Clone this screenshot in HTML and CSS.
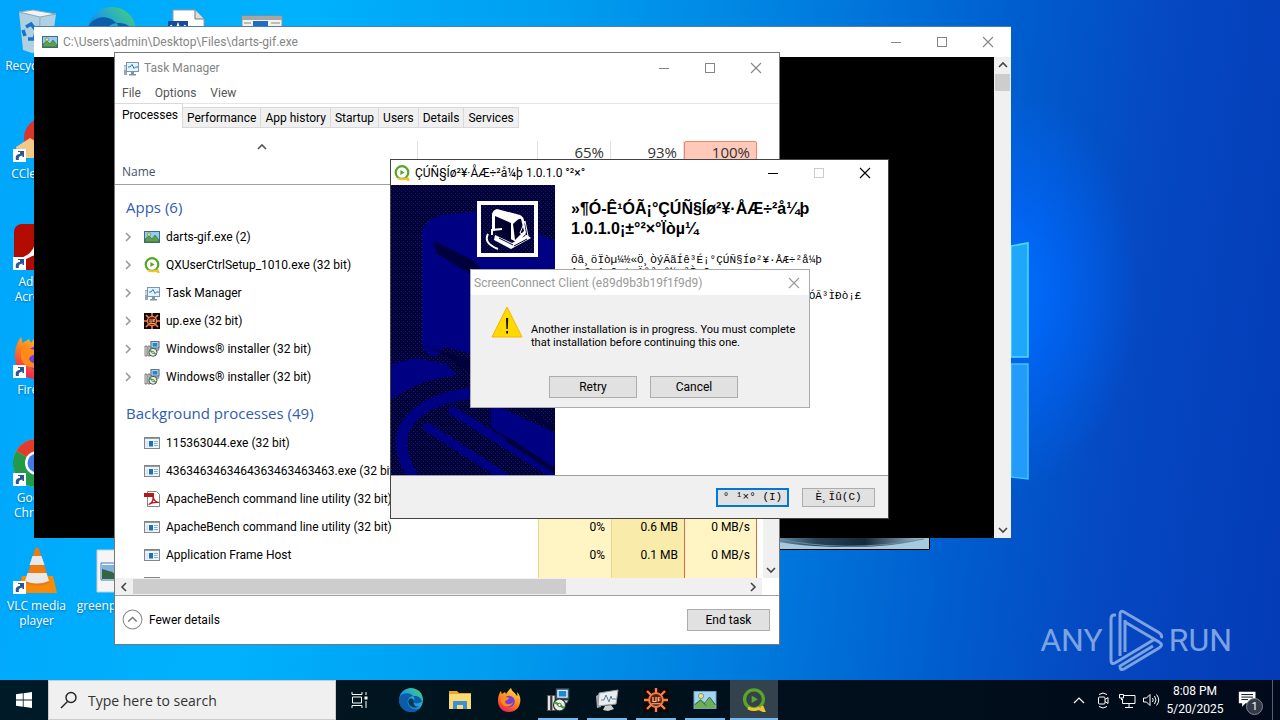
FILE: index.html
```html
<!DOCTYPE html>
<html lang="en">
<head>
<meta charset="utf-8">
<title>Desktop</title>
<link rel="stylesheet" href="styles.css">
</head>
<body>
<svg class="defs" aria-hidden="true">
  <defs>
    <linearGradient id="edgeG" x1="0" y1="1" x2="1" y2="0"><stop offset="0" stop-color="#0c59a4"/><stop offset=".5" stop-color="#1b9de2"/><stop offset="1" stop-color="#4fd66b"/></linearGradient>
    <linearGradient id="foxG" x1="0.8" y1="0" x2="0.3" y2="1"><stop offset="0" stop-color="#ffe14a"/><stop offset=".5" stop-color="#ff8a1e"/><stop offset="1" stop-color="#f0204f"/></linearGradient>
    <linearGradient id="steelG" x1="0" y1="0" x2="1" y2="0"><stop offset="0" stop-color="#6d9cba"/><stop offset=".3" stop-color="#274257"/><stop offset=".6" stop-color="#152a3a"/><stop offset="1" stop-color="#a8cbe0"/></linearGradient>
    <pattern id="dots" width="4" height="4" patternUnits="userSpaceOnUse"><rect width="4" height="4" fill="#00003c"/><path d="M0 0h1v1H0zM2 2h1v1H2z" fill="#1c1c50"/></pattern>
  </defs>
  <symbol id="i-picture" viewBox="0 0 16 16"><rect x=".5" y="2.500" width="15" height="11" fill="#8fd0f2" stroke="#3b6f8c"/><path d="M1 13v-3l4-3 3 3 3-4 4 5v2z" fill="#5f9f4c" stroke="#2f5f3c" stroke-width=".6"/><circle cx="5" cy="5.500" r="1.700" fill="#f5e56b" stroke="#4d6d5b" stroke-width=".6"/></symbol>
  <symbol id="i-picture-lg" viewBox="0 0 24 24"><rect x="1" y="3.500" width="22" height="17" fill="#a5d5f2" stroke="#6fa3c4"/><path d="M1.500 20v-4l6-5 5 4 4-6 6 7v4z" fill="#6fae55"/><path d="M1.500 17l6-5 6 6M11 16l5.500-7 6 8" fill="none" stroke="#2f6f5c"/><circle cx="8" cy="8" r="2.600" fill="#f7e05f" stroke="#5b8aa0" stroke-width=".8"/></symbol>
  <symbol id="i-qx" viewBox="0 0 16 16"><circle cx="8" cy="7.500" r="6.300" fill="none" stroke="#58a528" stroke-width="2.200"/><path d="M4 13.200c3 1.500 5 1.500 7 .4l3.500 1.600-1.300-3.200" fill="none" stroke="#f0c42e" stroke-width="2"/><path d="M6.400 5v5l4.200-2.500z" fill="#58a528"/></symbol>
  <symbol id="i-tm" viewBox="0 0 16 16"><path d="M1 5h3v10H1z" fill="#9aa6b0"/><path d="M1 7h3M1 9h3" stroke="#fff"/><rect x="3.500" y="2.500" width="12" height="9" fill="#e3f2fb" stroke="#7c95a8"/><path d="M5 7h2l2-2.500 2 4 1.500-1.500H15" fill="none" stroke="#2478c0"/><path d="M8 12h3v2h2v1.500H6V14h2z" fill="#7c95a8"/></symbol>
  <symbol id="i-up" viewBox="0 0 16 16"><rect width="16" height="16" fill="#130704"/><circle cx="8" cy="8" r="4.600" fill="#5c1d0a" stroke="#ef7b45" stroke-width="1.300"/><path d="M8 0v4M8 12v4M0 8h4M12 8h4M2 2l3 3M11 11l3 3M14 2l-3 3M5 11l-3 3" stroke="#f08250" stroke-width="1.600"/><path d="M6 6v3h2V6M9.500 9V6.500H11M9.500 8H11M5 10.500h6" fill="none" stroke="#ffc08c" stroke-width=".8"/></symbol>
  <symbol id="i-inst" viewBox="0 0 16 16"><path d="M1 5h2v10H1zM4 5h2v10H4z" fill="#e6e6e6" stroke="#555" stroke-width=".7"/><rect x="7" y=".7" width="8" height="6.300" fill="#e6eef4" stroke="#39536b"/><rect x="8.500" y="2" width="5" height="3.700" fill="#178bd8"/><path d="M9 8h6l-1 2h-4z" fill="#c5d1d9" stroke="#444" stroke-width=".5"/><circle cx="9" cy="11.300" r="4" fill="#e4f2e0" stroke="#333" stroke-width=".8"/><path d="M9 11.300 5.800 9.500M9 11.300l3 2" stroke="#43a34a" stroke-width="1.500"/><circle cx="9" cy="11.300" r="1.100" fill="#fff" stroke="#333" stroke-width=".5"/></symbol>
  <symbol id="i-app" viewBox="0 0 16 16"><rect x=".5" y="2.500" width="15" height="11" fill="#eef5fa" stroke="#858585"/><path d="M1 3h14v1H1z" fill="#999"/><rect x="5" y="6" width="4" height="5.500" fill="#1c72b8"/><path d="M10 6.500h4M10 8.500h3.500M10 10.500h4" stroke="#7cb3d6"/><path d="M2 6v6M3.500 6v6" stroke="#cfe3f0"/></symbol>
  <symbol id="i-pdf" viewBox="0 0 16 16"><path d="M3.500.5h9l3 3v12h-12z" fill="#fff" stroke="#8d8080"/><path d="M0 2h10v4H0z" fill="#b3171f"/><path d="M4.500 13.500c3-1 5-4 4.500-8 1 4 3 6 6 6-4-.5-8 .5-10.500 2z" fill="none" stroke="#b3171f" stroke-width="1.200"/></symbol>
  <symbol id="i-edge" viewBox="0 0 24 24"><circle cx="12" cy="12" r="12" fill="url(#edgeG)"/><path d="M0 12c0-6 8-9 13-5 4 3 2 6 1 7 2 2 6 2 9-.5C22 10 20 8 15 8 9 8 7 14 10 18s8 4 11 2c-3 4-8 5-13 3C3 21 0 17 0 12z" fill="#0b5cab"/><path d="M14.500 14.500c.8-1.500 0-4-2.500-4-3 0-3.500 4-1 7 2 2 6 3 10 1-3 1-6 0-6.500-4z" fill="#06182c" opacity=".75"/></symbol>
  <symbol id="i-folder" viewBox="0 0 24 24"><path d="M1 3h8l2 2h12v3H1z" fill="#e9a823"/><path d="M1 6h22v15H1z" fill="#fbd975"/><path d="M5 21v-7q0-1 1-1h12q1 0 1 1v7h-4v-4H9v4z" fill="#3b8fd2"/></symbol>
  <symbol id="i-firefox" viewBox="0 0 24 24"><path d="M12 24C5 24 .8 19 1 12 1 8 3 4 4 3l.8 3L8 4l1 2c2-3 4-5 5-6 1 4 4 4 6 8 1-1 0-3 0-4 3 3 4 7 3 11-1 6-6 9-11 9z" fill="url(#foxG)"/><circle cx="12" cy="13.500" r="5.800" fill="#7540d8"/><path d="M4 9c3-1 6 0 8 1 0 2-4 2-4 4 1 3 6 3 8 0-1 6-11 6-12-1z" fill="#ff8b18"/></symbol>
  <symbol id="i-chrome" viewBox="0 0 48 48"><circle cx="24" cy="24" r="24" fill="#f6c324"/><path d="M24 24 3.200 12A24 24 0 0 1 44.800 12z" fill="#e33b2e"/><path d="M24 24 3.200 12A24 24 0 0 0 24 48l10-18z" fill="#229a4a"/><circle cx="24" cy="24" r="12" fill="#fff"/><circle cx="24" cy="24" r="9.500" fill="#4079e8"/></symbol>
  <symbol id="i-min" viewBox="0 0 12 12"><path d="M1 6.500h10" stroke="currentColor"/></symbol>
  <symbol id="i-max" viewBox="0 0 12 12"><rect x="1.500" y="1.500" width="9" height="9" fill="none" stroke="currentColor"/></symbol>
  <symbol id="i-close" viewBox="0 0 12 12"><path d="M1 1l10 10M11 1 1 11" stroke="currentColor" stroke-width="1.100"/></symbol>
  <symbol id="i-chev" viewBox="0 0 10 10"><path d="M3 1l4 4-4 4" fill="none" stroke="currentColor" stroke-width="1.600"/></symbol>
  <symbol id="i-link" viewBox="0 0 13 13"><rect width="13" height="13" fill="#fff"/><path d="M3 11c-1-4 1-6 4-6V3H5V2h6v6H9.500V6.500C7 7 5 8 6 11z" fill="#2b5797"/></symbol>
</svg>

<div class="screen">
  <main class="desktop">
    <svg class="wall-logo" viewBox="0 0 30 250" aria-hidden="true"><path d="M0 9l17-3v114H0z" fill="#1fa8fb" stroke="#4fdcff" stroke-width="1.500"/><path d="M0 127h17v115l-17-2z" fill="#229bfa" stroke="#3cc4ff" stroke-width="1.500"/></svg>

    <ul class="shortcuts">
      <li class="shortcut r1 c1"><svg viewBox="0 0 48 48"><path d="M6 5l14-2 23 4-5 36-19 3-9-3z" fill="#c3d5de" opacity=".9"/><path d="M6 5l14-2 23 4-16 3z" fill="#eef4f7" stroke="#8fa6b2"/><path d="M27 10l-1 35" stroke="#96abb7"/><path d="M13 20l5-3 4 5M23 26l-2 6h-6M12 29l-2-6" fill="none" stroke="#1674c9" stroke-width="3.500"/></svg><span>Recycle Bin</span></li>
      <li class="shortcut r1 c2"><svg viewBox="0 0 24 24"><use href="#i-edge"/></svg></li>
      <li class="shortcut r1 c3"><svg viewBox="0 0 48 48"><path d="M10 3h22l9 9v36H10z" fill="#fff" stroke="#9a9a9a"/><path d="M32 3v9h9" fill="#ddd" stroke="#777"/><path d="M5 14h20v20H5z" fill="#164a9c"/><path d="M8 18l3 12 4-12 4 12 3-12" fill="none" stroke="#fff" stroke-width="2"/></svg></li>
      <li class="shortcut r1 c4"><svg viewBox="0 0 48 48"><path d="M4 9h40v34H4z" fill="#f1f1f1" stroke="#8f8f8f"/><path d="M4 9h40v4H4z" fill="#a9a49e"/><path d="M15 14h15v18H15z" fill="#1c6fc2"/><path d="M33 16h9M33 20h9M6 16h7M6 20h7" stroke="#888"/></svg></li>
      <li class="shortcut r2 c1"><svg viewBox="0 0 48 48"><circle cx="31" cy="23" r="20" fill="#d9352c"/><circle cx="33" cy="25" r="12" fill="#5a9fdc"/><path d="M3 32l14-9 10 6v14H6z" fill="#f3c98b"/><use href="#i-link" x="0" y="34" width="13" height="13"/></svg><span>CCleaner</span></li>
      <li class="shortcut r3 c1"><svg viewBox="0 0 48 48"><rect x="1" y="1" width="46" height="46" rx="8" fill="#b30b00"/><path d="M10 36c10-4 16-14 14-25 2 12 8 17 16 18-10-1-21 1-30 7z" fill="none" stroke="#fff" stroke-width="3"/><use href="#i-link" x="0" y="34" width="13" height="13"/></svg><span>Adobe Acrobat</span></li>
      <li class="shortcut r4 c1"><svg viewBox="0 0 48 48"><use href="#i-firefox" width="48" height="48"/><use href="#i-link" x="0" y="34" width="13" height="13"/></svg><span>Firefox</span></li>
      <li class="shortcut r5 c1"><svg viewBox="0 0 48 48"><use href="#i-chrome" width="48" height="48"/><use href="#i-link" x="0" y="34" width="13" height="13"/></svg><span>Google Chrome</span></li>
      <li class="shortcut r6 c1"><svg viewBox="0 0 48 48"><path d="M9 29h31l4 17H4z" fill="#f58a0b"/><path d="M22 2q2-3 4 0l11 34q-13 6-25 0z" fill="#ef7a12"/><path d="M19.500 9h9l3 9h-15zM14.500 26h19l2.500 8q-12 5-24 0z" fill="#e9e9e9"/><use href="#i-link" x="0" y="34" width="13" height="13"/></svg><span>VLC media player</span></li>
      <li class="shortcut r6 c2"><svg viewBox="0 0 48 48"><path d="M9 3h30v42H9z" fill="#f5f5f5" stroke="#ccc"/><path d="M13 16h21v17H13z" fill="#fff" stroke="#3f75b5"/><path d="M14 18h19v7H14z" fill="#7fb2e2"/><path d="M14 22q8 2 19 6v4H14z" fill="#326546"/></svg><span>greenps.png</span></li>
    </ul>

    <svg class="photo" viewBox="0 0 160 12" preserveAspectRatio="none" aria-hidden="true"><rect width="160" height="12" fill="#a5c9de"/><path d="M0 0h158q-30 9-80 9T0 2z" fill="url(#steelG)"/><path d="M4 0q70 16 150 1" fill="none" stroke="#6c8ba0"/><path d="M0 11.500h159.500V0" fill="none" stroke="#000"/></svg>

    <div class="watermark"><span>ANY</span><svg viewBox="0 0 56 64" aria-hidden="true"><path d="M8 7H6q-3 0-3 4v41q0 5 4 3l40-24M12 48V6q0-4 4-2l34 20q5 3 3 6M17 12v32M17 14l34 20q5 3 0 6L16 61q-4 2-4-3l33-20" fill="none" stroke="currentColor" stroke-width="3"/></svg><span>RUN</span></div>

    <section class="window console">
      <header class="titlebar"><svg class="ic"><use href="#i-picture"/></svg><span class="title">C:\Users\admin\Desktop\Files\darts-gif.exe</span>
        <button aria-label="Minimize"><svg><use href="#i-min"/></svg></button><button aria-label="Maximize"><svg><use href="#i-max"/></svg></button><button aria-label="Close"><svg><use href="#i-close"/></svg></button></header>
      <div class="console-body"><div class="vscroll"><svg class="up"><use href="#i-chev"/></svg><i class="thumb"></i><svg class="down"><use href="#i-chev"/></svg></div></div>
    </section>

    <section class="window taskmgr">
      <header class="titlebar"><svg class="ic"><use href="#i-tm"/></svg><span class="title">Task Manager</span>
        <button aria-label="Minimize"><svg><use href="#i-min"/></svg></button><button aria-label="Maximize"><svg><use href="#i-max"/></svg></button><button aria-label="Close"><svg><use href="#i-close"/></svg></button></header>
      <nav class="menu"><button>File</button><button>Options</button><button>View</button></nav>
      <nav class="tabs"><button class="on">Processes</button><button>Performance</button><button>App history</button><button>Startup</button><button>Users</button><button>Details</button><button>Services</button></nav>
      <div class="list">
        <div class="clip">
          <table>
            <colgroup><col><col class="c-status"><col class="c-num"><col class="c-num"><col class="c-num"></colgroup>
            <thead><tr><th><svg class="sort"><use href="#i-chev"/></svg><span>Name</span></th><th></th><th>65%</th><th>93%</th><th class="hot">100%</th></tr></thead>
            <tbody>
              <tr class="group"><td colspan="2">Apps (6)</td><td></td><td></td><td></td></tr>
              <tr><td colspan="2"><div class="proc"><svg class="tw"><use href="#i-chev"/></svg><svg class="ic"><use href="#i-picture"/></svg>darts-gif.exe (2)</div></td><td></td><td></td><td></td></tr>
              <tr><td colspan="2"><div class="proc"><svg class="tw"><use href="#i-chev"/></svg><svg class="ic"><use href="#i-qx"/></svg>QXUserCtrlSetup_1010.exe (32 bit)</div></td><td></td><td></td><td></td></tr>
              <tr><td colspan="2"><div class="proc"><svg class="tw"><use href="#i-chev"/></svg><svg class="ic"><use href="#i-tm"/></svg>Task Manager</div></td><td></td><td></td><td></td></tr>
              <tr><td colspan="2"><div class="proc"><svg class="tw"><use href="#i-chev"/></svg><svg class="ic"><use href="#i-up"/></svg>up.exe (32 bit)</div></td><td></td><td></td><td></td></tr>
              <tr><td colspan="2"><div class="proc"><svg class="tw"><use href="#i-chev"/></svg><svg class="ic"><use href="#i-inst"/></svg>Windows® installer (32 bit)</div></td><td></td><td></td><td></td></tr>
              <tr><td colspan="2"><div class="proc"><svg class="tw"><use href="#i-chev"/></svg><svg class="ic"><use href="#i-inst"/></svg>Windows® installer (32 bit)</div></td><td></td><td></td><td></td></tr>
              <tr class="group"><td colspan="2">Background processes (49)</td><td></td><td></td><td></td></tr>
              <tr><td colspan="2"><div class="proc sub"><svg class="ic"><use href="#i-app"/></svg>115363044.exe (32 bit)</div></td><td></td><td></td><td></td></tr>
              <tr><td colspan="2"><div class="proc sub"><svg class="ic"><use href="#i-app"/></svg>4363463463464363463463463.exe (32 bit)</div></td><td></td><td></td><td></td></tr>
              <tr><td colspan="2"><div class="proc sub"><svg class="ic"><use href="#i-pdf"/></svg>ApacheBench command line utility (32 bit)</div></td><td></td><td></td><td></td></tr>
              <tr><td colspan="2"><div class="proc sub"><svg class="ic"><use href="#i-app"/></svg>ApacheBench command line utility (32 bit)</div></td><td>0%</td><td>0.6 MB</td><td>0 MB/s</td></tr>
              <tr><td colspan="2"><div class="proc sub"><svg class="ic"><use href="#i-app"/></svg>Application Frame Host</div></td><td>0%</td><td>0.1 MB</td><td>0 MB/s</td></tr>
              <tr><td colspan="2"><div class="proc sub"><svg class="ic"><use href="#i-app"/></svg></div></td><td></td><td></td><td></td></tr>
            </tbody>
          </table>
        </div>
        <div class="vscroll"><svg class="down"><use href="#i-chev"/></svg></div>
      </div>
      <div class="hscroll"><svg class="left"><use href="#i-chev"/></svg><i class="thumb"></i><svg><use href="#i-chev"/></svg></div>
      <footer class="tm-foot"><button class="fewer"><svg viewBox="0 0 20 20"><circle cx="10" cy="10" r="9" fill="none" stroke="#8a8a8a"/><path d="M6 12l4-4 4 4" fill="none" stroke="#777" stroke-width="1.300"/></svg>Fewer details</button><button class="btn">End task</button></footer>
    </section>

    <section class="window wizard">
      <header class="titlebar"><svg class="ic"><use href="#i-qx"/></svg><span class="title">ÇÚÑ§Íø²¥·ÅÆ÷²å¼þ 1.0.1.0 °²×°</span>
        <button aria-label="Minimize"><svg><use href="#i-min"/></svg></button><button class="off" aria-label="Maximize" disabled><svg><use href="#i-max"/></svg></button><button aria-label="Close"><svg><use href="#i-close"/></svg></button></header>
      <div class="wiz-body">
        <svg class="art" viewBox="0 0 164 290" preserveAspectRatio="xMidYMin slice" aria-hidden="true">
          <rect width="164" height="290" fill="url(#dots)"/>
          <path d="M31 48q2-14 20-18l36-4q10-1 22 6l55 24v110l-80 4-30-8-10 10q-12-2-13-14z" fill="#000082"/>
          <path d="M43 56l40 20 12 14v12l-8-8-42-26zM31 160l20 8 40 30v-20z" fill="#00003c"/>
          <path d="M0 215q30-22 66-24l-10-12-30-6-26 6z" fill="#000082"/>
          <path d="M22 292Q-2 252 24 230 40 214 80 208" fill="none" stroke="#000082" stroke-width="11"/>
          <path d="M62 226l102 64M36 242l78 50" stroke="#000082" stroke-width="9" stroke-linecap="round"/>
          <path d="M100 218l64 30v36l-64-42z" fill="#000082"/>
          <path d="M112 212l52 32M116 254l48 32" stroke="#00003c" stroke-width="5"/>
          <rect x="88" y="18" width="57" height="52" fill="url(#dots)" stroke="#fff" stroke-width="4"/>
          <path d="M101 29q1-4 5-5l23 6q4 2 4 6l2 12-8 10-26-14z" fill="#fff"/><path d="M104 31l16 7v18l-16-10z" fill="#00002e"/><path d="M122 39q6-6 8-5l3 12-9 9z" fill="#00002e"/><path d="M104 50l17 8 15-8 4 3-20 11-17-9z" fill="#fff"/><path d="M108 53l14 7M123 61l13-7" stroke="#00002e"/><path d="M111 44l-10 1v5M97 49q-5 9 10 15" fill="none" stroke="#fff" stroke-width="2"/><path d="M134 36l-5 12 8 3z" fill="none" stroke="#fff"/>
        </svg>
        <div class="wiz-text">
          <h1>»¶Ó-Ê¹ÓÃ¡°ÇÚÑ§Íø²¥·ÅÆ÷²å¼þ 1.0.1.0¡±°²×°Ïòµ¼</h1>
          <p>Õâ¸öÏòµ¼½«Ö¸ÒýÄãÍê³É¡°ÇÚÑ§Íø²¥·ÅÆ÷²å¼þ<br>1.0.1.0¡±µÄ°²×°½ø³Ì¡£</p>
          <p>ÔÚ¿ªÊ¼°²×°Ö®Ç°£¬½¨ÒéÏÈ¹Ø±ÕÆäËûËùÓÐÓ¦ÓÃ³ÌÐò¡£</p>
        </div>
      </div>
      <footer class="wiz-foot"><button class="btn primary">° ¹×° (I)</button><button class="btn">È¸Ïû(C)</button></footer>
    </section>

    <section class="window dialog">
      <header class="titlebar"><span class="title">ScreenConnect Client (e89d9b3b19f1f9d9)</span><button aria-label="Close"><svg><use href="#i-close"/></svg></button></header>
      <div class="dlg-body"><svg viewBox="0 0 32 32" aria-hidden="true"><path d="M16 1l15 30H1z" fill="#ffd900" stroke="#f5b400" stroke-linejoin="round"/><path d="M15 12h2.200l-.4 11h-1.400zM15.200 25h1.800v2.500h-1.800z" fill="#111"/></svg><p>Another installation is in progress. You must complete that installation before continuing this one.</p></div>
      <footer class="dlg-foot"><button class="btn">Retry</button><button class="btn">Cancel</button></footer>
    </section>
  </main>

  <footer class="taskbar">
    <button class="start" aria-label="Start"><svg viewBox="0 0 16 16"><path d="M0 2.300 6.800 1.300v6.300H0zM7.600 1.200 16 0v7.600H7.600zM0 8.400h6.800v6.300L0 13.700zM7.600 8.400H16V16l-8.400-1.200z" fill="#fff"/></svg></button>
    <label class="search"><svg viewBox="0 0 18 18"><circle cx="11" cy="6.500" r="5" fill="none" stroke="#222" stroke-width="1.400"/><path d="M7.500 10.500 1 17" stroke="#222" stroke-width="1.400"/></svg><input type="text" placeholder="Type here to search" aria-label="Search"></label>
    <button class="view" aria-label="Task View"><svg viewBox="0 0 18 16"><path d="M1 0v2.500h10V0M1 16v-2.500h10V16M1.500 5h9v6h-9zM15 0v3M15 9v7" fill="none" stroke="#fff"/><path d="M13.500 4.500h3v3h-3z" fill="#fff"/></svg></button>
    <div class="apps">
      <button aria-label="Edge"><svg><use href="#i-edge"/></svg></button>
      <button aria-label="File Explorer"><svg><use href="#i-folder"/></svg></button>
      <button aria-label="Firefox"><svg><use href="#i-firefox"/></svg></button>
      <button class="run" aria-label="Installer"><svg><use href="#i-inst"/></svg></button>
      <button class="run" aria-label="Task Manager"><svg viewBox="0 0 24 24"><path d="M1 8l5-3v14l-4 1z" fill="#a9a9a9"/><path d="M4 5l19-3-2 14-18 2z" fill="#e9edef" stroke="#999"/><path d="M6 12h3l2-5 3 7 2-6 1 3h4" fill="none" stroke="#5a7f9c"/><path d="M10 18l6-1 3 4-6 2-5-1z" fill="#cfcfcf"/></svg></button>
      <button class="run" aria-label="up.exe"><svg><use href="#i-up"/></svg></button>
      <button class="run" aria-label="darts-gif.exe"><svg><use href="#i-picture-lg"/></svg></button>
      <button class="run active" aria-label="QXUserCtrlSetup"><svg><use href="#i-qx"/></svg></button>
    </div>
    <div class="tray">
      <svg viewBox="0 0 18 18"><path d="M4 12l5-5 5 5" fill="none" stroke="#fff" stroke-width="1.200"/></svg>
      <svg viewBox="0 0 18 18"><rect x="4.500" y="6" width="6.500" height="7" rx="1" fill="none" stroke="#fff"/><path d="M11 8.500l3-2v6l-3-2M5 3.500q4-3 8 0M5 15.500q4 3 8 0" fill="none" stroke="#fff"/></svg>
      <svg viewBox="0 0 18 18"><path d="M6 4.500h11v8H4.500V8M7 16.500h8M11 12.500v4M1.500 3.500h4v3.500h-4zM3.500 7v2" fill="none" stroke="#fff"/></svg>
      <svg viewBox="0 0 18 18"><path d="M1.500 7h3l3.500-3.500v11L4.500 11h-3zM10.500 7q1.500 2 0 4M12.500 5q3 4 0 8M14.500 3.500q4.500 5.500 0 11" fill="none" stroke="#fff"/></svg>
    </div>
    <time class="clock"><span>8:08 PM</span><span>5/20/2025</span></time>
    <button class="notes" aria-label="Notifications"><svg viewBox="0 0 24 24"><path d="M1 2h20v14H9l-4 4v-4H1z" fill="#fff"/><path d="M4 5.500h14M4 8.500h14M4 11.500h8" stroke="#0a1626" stroke-width="1.200"/></svg><span class="badge">1</span></button>
    <i class="peek"></i>
  </footer>
</div>
</body>
</html>
```
FILE: styles.css
```css
* { box-sizing: border-box; }
body { margin: 0; font-family: Roboto, "Open Sans", sans-serif; font-size: 12px; color: #000; }
button { font: inherit; color: inherit; border: 0; background: none; padding: 0; }
.defs { position: absolute; width: 0; height: 0; }
.screen { display: flex; flex-direction: column; height: 100vh; overflow: hidden; }

.desktop {
  position: relative; flex: 1; min-height: 0; overflow: hidden;
  background:
    radial-gradient(ellipse 130px 200px at 1010px 290px, #0070ff 0, #0068ffaa 40%, #0060ff00 100%),
    linear-gradient(97deg, #00a6fb 0, #00b2fd 22%, #009cf0 42%, #0080e0 58%, #005fcf 74%, #0548c2 86%, #043bb6 100%);
}
.wall-logo { position: absolute; left: 1011px; top: 237px; width: 30px; height: 250px; }
.shortcuts { margin: 0; padding: 0; list-style: none; display: grid; grid-template-columns: repeat(4, 75px); grid-template-rows: repeat(6, 108px); }
.shortcut { display: flex; flex-direction: column; align-items: center; gap: 3px; padding: 7px 3px 0 1px; color: #fff; text-align: center; font-family: "Open Sans", sans-serif; line-height: 15px; text-shadow: 0 1px 2px #0469a5; }
.shortcut svg { width: 48px; height: 48px; flex: none; }
.r1 { grid-row: 1; } .r2 { grid-row: 2; } .r3 { grid-row: 3; } .r4 { grid-row: 4; } .r5 { grid-row: 5; } .r6 { grid-row: 6; }
.c1 { grid-column: 1; } .c2 { grid-column: 2; } .c3 { grid-column: 3; } .c4 { grid-column: 4; }
.photo { position: absolute; left: 770px; top: 538px; width: 160px; height: 12px; }
.watermark { position: absolute; right: 48px; bottom: 8px; display: flex; align-items: center; gap: 5px; color: #7ba3e2; font-size: 32px; }
.watermark svg { width: 56px; height: 64px; }

.window { position: absolute; display: flex; flex-direction: column; background: #fff; border: 1px solid #777; }
.titlebar { display: flex; align-items: center; height: 30px; flex: none; color: #858585; }
.title { flex: 1; white-space: nowrap; }
.titlebar button { width: 46px; height: 100%; display: grid; place-items: center; }
.titlebar button svg { width: 12px; height: 12px; }
.titlebar .ic { margin: 0 5px 0 8px; }
.ic { width: 16px; height: 16px; flex: none; }
.btn { height: 22px; background: #e1e1e1; border: 1px solid #adadad; text-align: center; }

.console { left: 34px; top: 26px; width: 977px; height: 512px; border-width: 1px 0 0; border-color: #4d7fae; }
.console-body { flex: 1; background: #000; display: flex; justify-content: flex-end; }
.vscroll { width: 17px; background: #f0f0f0; display: flex; flex-direction: column; align-items: center; padding: 3px 0; color: #444; }
.vscroll svg, .hscroll svg { width: 10px; height: 10px; flex: none; }
.up { transform: rotate(-90deg); }
.down { transform: rotate(90deg); margin-top: auto; }
.left { transform: rotate(180deg); }
.console .thumb { width: 15px; height: 17px; margin-top: 4px; background: #cdcdcd; }

.taskmgr { left: 114px; top: 52px; width: 666px; height: 593px; }
.menu { display: flex; gap: 14px; height: 20px; padding-left: 7px; flex: none; color: #555; }
.tabs { display: flex; align-items: flex-end; height: 25px; flex: none; border-top: 1px solid #e6e6e6; }
.tabs button { height: 21px; padding: 0 4px; background: #f0f0f0; border: 1px solid #d9d9d9; border-left-width: 0; white-space: nowrap; }
.tabs .on { height: 25px; padding: 0 4px 3px 7px; background: #fff; border-bottom: 0; }
.list { flex: 1; min-height: 0; display: flex; }
.clip { flex: 1; overflow: hidden; padding: 13px 6px 0 0; }
table { width: 100%; border-collapse: separate; border-spacing: 0; table-layout: fixed; }
.c-status { width: 120px; }
.c-num { width: 73px; }
th { height: 44px; padding: 0 6px; border-right: 1px solid #e0e0e0; border-bottom: 1px solid #a0a0a0; font: 15px/22px "Open Sans", sans-serif; text-align: right; vertical-align: top; color: #333; }
th:first-child { position: relative; padding: 20px 7px 0; font-size: 12px; text-align: left; color: #44546a; }
th.hot { line-height: 20px; background: #ffc9b9; border: 1px solid #ee8468; border-radius: 2px 2px 0 0; }
.sort { position: absolute; left: 142px; top: 1px; width: 10px; height: 10px; transform: rotate(-90deg); color: #555; }
td { height: 28px; padding: 0 6px; text-align: right; white-space: nowrap; }
td:first-child { padding: 0; text-align: left; }
td:nth-child(2) { background: #fff4c4; border-left: 1px solid #e6d795; }
td:nth-child(3) { background: #f9ecaa; border-left: 1px solid #e6d795; }
td:nth-child(4) { background: #fff4c4; border-left: 1px solid #e0674a; border-right: 1px solid #e0674a; }
.group td { height: 38px; font: 15px "Open Sans", sans-serif; }
.group td:first-child { padding: 5px 0 0 11px; color: #2f5cb4; }
.proc { display: flex; align-items: center; height: 28px; padding-left: 8px; }
.proc .ic { margin-right: 6px; }
.tw { width: 10px; height: 10px; margin-right: 11px; color: #999; }
.sub { padding-left: 29px; }
.taskmgr .list .vscroll { width: 16px; margin-top: 57px; }
.hscroll { display: flex; align-items: center; height: 17px; flex: none; margin-right: 17px; padding: 0 4px; background: #f0f0f0; color: #444; }
.hscroll .thumb { width: 433px; height: 15px; margin: 0 auto 0 4px; background: #cdcdcd; }
.tm-foot { display: flex; align-items: center; justify-content: space-between; height: 49px; flex: none; padding: 0 9px 1px 7px; border-top: 1px solid #a0a0a0; }
.fewer { display: flex; align-items: center; gap: 6px; }
.fewer svg { width: 21px; height: 21px; }
.tm-foot .btn { width: 83px; }

.wizard { left: 390px; top: 159px; width: 499px; height: 360px; border-color: #444; }
.wizard .titlebar { height: 25px; color: #000; }
.wizard .titlebar .ic { margin: 0 5px 0 3px; }
.titlebar .off { color: #ccc; }
.wiz-body { flex: 1; min-height: 0; display: flex; }
.art { width: 164px; height: 100%; flex: none; }
.wiz-text { flex: 1; padding: 14px 16px; }
.wiz-text h1 { margin: 0 40px 15px 0; font: bold 16px/20px "Liberation Sans", sans-serif; }
.wiz-text p { margin: 0 0 12px; font: 11px/12px "Liberation Mono", monospace; white-space: nowrap; }
.wiz-foot { display: flex; align-items: center; justify-content: flex-end; gap: 13px; height: 43px; padding-right: 13px; background: #f0f0f0; border-top: 1px solid #a0a0a0; font: 11px "Liberation Mono", monospace; }
.wiz-foot .btn { width: 73px; height: 19px; }
.wiz-foot .primary { border: 2px solid #0078d7; }

.dialog { left: 470px; top: 269px; width: 340px; height: 139px; background: #f0f0f0; border-color: #aaa; }
.dialog .titlebar { height: 25px; padding-left: 3px; background: #fff; color: #999; }
.dialog .titlebar button { width: 30px; }
.dlg-body { display: flex; gap: 8px; padding: 11px 8px 0 20px; flex: 1; }
.dlg-body svg { width: 32px; height: 32px; flex: none; }
.dlg-body p { margin: 17px 0 0; font-size: 11px; line-height: 13px; }
.dlg-foot { display: flex; justify-content: center; gap: 13px; padding: 0 0 9px 7px; font-size: 12px; }
.dlg-foot .btn { width: 88px; }

.taskbar { display: flex; height: 40px; flex: none; background: linear-gradient(90deg, #001b28, #00131d 40%, #010a1a); color: #fff; }
.start, .view { width: 48px; display: grid; place-items: center; }
.start svg { width: 16px; height: 16px; }
.view svg { width: 18px; height: 16px; }
.search { flex: 0 1 288px; display: flex; align-items: center; gap: 10px; padding-left: 11px; background: #f0f0f0; border: 1px solid #ccc; }
.search svg { width: 18px; height: 18px; }
.search input { flex: 1; min-width: 0; border: 0; padding: 0; background: none; font: 14px "Open Sans", sans-serif; }
.search input::placeholder { color: #333; opacity: 1; }
.apps { display: flex; gap: 1px; padding-left: 3px; margin-right: auto; }
.apps button { width: 48px; height: 40px; display: grid; place-items: center; }
.apps svg { width: 24px; height: 24px; }
.run { background: linear-gradient(#76b9ed, #76b9ed) center bottom / 40px 2px no-repeat; }
.apps .active { background-color: #33424c; background-size: 48px 2px; }
.tray { display: flex; align-items: center; gap: 6px; margin-right: 8px; }
.tray svg { width: 18px; height: 18px; }
.clock { display: flex; flex-direction: column; justify-content: center; align-items: center; width: 54px; line-height: 18px; }
.notes { position: relative; width: 50px; padding-left: 16px; text-align: left; }
.notes svg { display: block; width: 20px; height: 20px; }
.badge { position: absolute; left: 24px; top: 18px; width: 17px; height: 17px; border-radius: 50%; background: #333b46; border: 1px solid #7d8590; text-align: center; font-size: 11px; line-height: 15px; }
.peek { width: 8px; border-left: 1px solid #55606e; }
```
